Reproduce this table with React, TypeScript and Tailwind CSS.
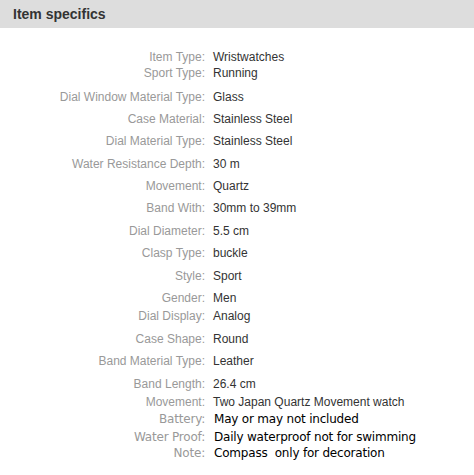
type Spec = { label: string; value: string; gap: string; alt?: boolean };

const SPECS: Spec[] = [
  { label: 'Item Type:', value: 'Wristwatches', gap: 'mt-0' },
  { label: 'Sport Type:', value: 'Running', gap: 'mt-0' },
  { label: 'Dial Window Material Type:', value: 'Glass', gap: 'mt-[8px]' },
  { label: 'Case Material:', value: 'Stainless Steel', gap: 'mt-[6px]' },
  { label: 'Dial Material Type:', value: 'Stainless Steel', gap: 'mt-[6px]' },
  { label: 'Water Resistance Depth:', value: '30 m', gap: 'mt-[7px]' },
  { label: 'Movement:', value: 'Quartz', gap: 'mt-[6px]' },
  { label: 'Band With:', value: '30mm to 39mm', gap: 'mt-[6px]' },
  { label: 'Dial Diameter:', value: '5.5 cm', gap: 'mt-[7px]' },
  { label: 'Clasp Type:', value: 'buckle', gap: 'mt-[6px]' },
  { label: 'Style:', value: 'Sport', gap: 'mt-[7px]' },
  { label: 'Gender:', value: 'Men', gap: 'mt-[6px]' },
  { label: 'Dial Display:', value: 'Analog', gap: 'mt-[2px]' },
  { label: 'Case Shape:', value: 'Round', gap: 'mt-[7px]' },
  { label: 'Band Material Type:', value: 'Leather', gap: 'mt-[6px]' },
  { label: 'Band Length:', value: '26.4 cm', gap: 'mt-[7px]' },
  { label: 'Movement:', value: 'Two Japan Quartz Movement watch', gap: 'mt-[2px]' },
  { label: 'Battery:', value: 'May or may not included', gap: 'mt-[1px]', alt: true },
  { label: 'Water Proof:', value: 'Daily waterproof not for swimming', gap: 'mt-[2px]', alt: true },
  { label: 'Note:', value: 'Compass\u00a0 only for decoration', gap: 'mt-0', alt: true },
];

export default function App() {
  return (
    <div className="w-[474px] h-[475px] bg-white font-['Liberation_Sans',Arial,sans-serif]">
      {/* header */}
      <div className="h-[28px] bg-[#dddddd] flex items-center pl-[13px]">
        <h2 className="text-[14px] font-bold text-[#333333] leading-none">Item specifics</h2>
      </div>

      {/* spec rows */}
      <div className="pt-[21px]">
        {SPECS.map((s, i) => (
          <div key={i} className={`flex h-[16px] items-center ${s.gap}`}>
            <div
              className={
                s.alt
                  ? "w-[205px] text-right text-[12px] tracking-[-0.2px] text-[#999999] font-['DejaVu_Sans',Verdana,sans-serif]"
                  : 'w-[205px] text-right text-[12px] text-[#999999]'
              }
            >
              {s.label}
            </div>
            <div
              className={
                s.alt
                  ? "pl-[9px] text-[12px] tracking-[-0.2px] text-black whitespace-pre font-['DejaVu_Sans',Verdana,sans-serif]"
                  : 'pl-[8px] text-[12px] text-[#333333]'
              }
            >
              {s.value}
            </div>
          </div>
        ))}
      </div>
    </div>
  );
}
